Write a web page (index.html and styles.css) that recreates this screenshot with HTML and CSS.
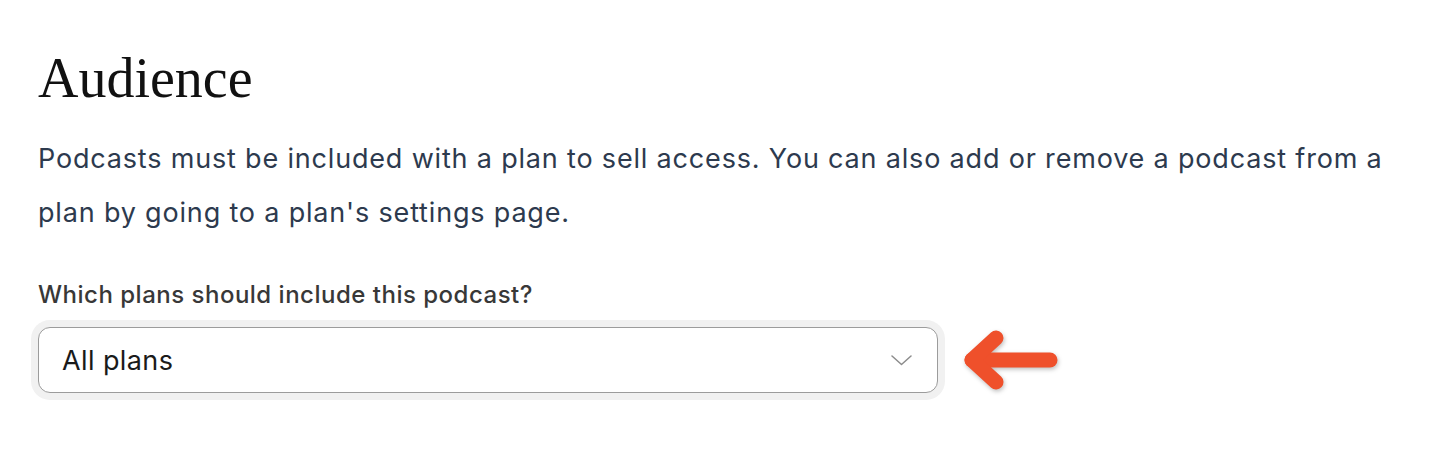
FILE: index.html
```html
<!DOCTYPE html>
<html lang="en">
<head>
    <meta charset="UTF-8">
    <title>Audience</title>
    <link rel="stylesheet" href="styles.css">
</head>
<body>
    <div class="section">
        <h1>Audience</h1>
        <p class="intro">Podcasts must be included with a plan to sell access. You can also add or remove a podcast from a plan by going to a plan's settings page.</p>

        <label class="field-label" for="plans">Which plans should include this podcast?</label>
        <div class="field-row">
            <div class="select-wrap">
                <div class="select" id="plans">
                    <span>All plans</span>
                    <svg class="chevron" width="21" height="11" viewBox="0 0 21 11">
                        <path d="M1 1 L10.5 9.5 L20 1" fill="none" stroke="#8c8c8c" stroke-width="1.5" stroke-linecap="round" stroke-linejoin="round"/>
                    </svg>
                </div>
            </div>
            <svg class="arrow" width="100" height="74" viewBox="0 0 100 74">
                <g fill="none" stroke="#ef502b" stroke-width="15" stroke-linecap="round" stroke-linejoin="round">
                    <path d="M10 37 L88 37"/>
                    <path d="M34 15 L10 37 L34 59"/>
                </g>
            </svg>
        </div>
    </div>
</body>
</html>
```

FILE: styles.css
```css
body {
    margin: 0;
    background: #ffffff;
    font-family: Inter, "Noto Sans", sans-serif;
}
.section {
    padding: 42px 38px 0 38px;
}
h1 {
    font-family: "Liberation Serif", "DejaVu Serif", serif;
    font-weight: normal;
    font-size: 56px;
    line-height: 72px;
    color: #111111;
    margin: 0 0 18px 0;
}
.intro {
    font-size: 27px;
    line-height: 54px;
    letter-spacing: 0.82px;
    color: #2d3a4e;
    margin: 0 0 40px 0;
    max-width: 1370px;
}
.field-label {
    display: block;
    font-size: 24px;
    line-height: 30px;
    letter-spacing: 0.5px;
    font-weight: 500;
    color: #383838;
    margin-bottom: 10px;
}
.field-row {
    display: flex;
    align-items: center;
    gap: 17px;
    margin-left: -7px;
}
.select-wrap {
    padding: 7px;
    background: #f1f1f1;
    border-radius: 19px;
}
.select {
    box-sizing: border-box;
    width: 900px;
    height: 66px;
    padding: 0 25px 0 23px;
    background: #ffffff;
    border: 1.5px solid #9c9c9c;
    border-radius: 12px;
    display: flex;
    align-items: center;
    justify-content: space-between;
    font-size: 27px;
    letter-spacing: 0.4px;
    color: #1a1a1a;
}
.arrow {
    filter: drop-shadow(1px 2px 2px rgba(0,0,0,0.25));
}
```
